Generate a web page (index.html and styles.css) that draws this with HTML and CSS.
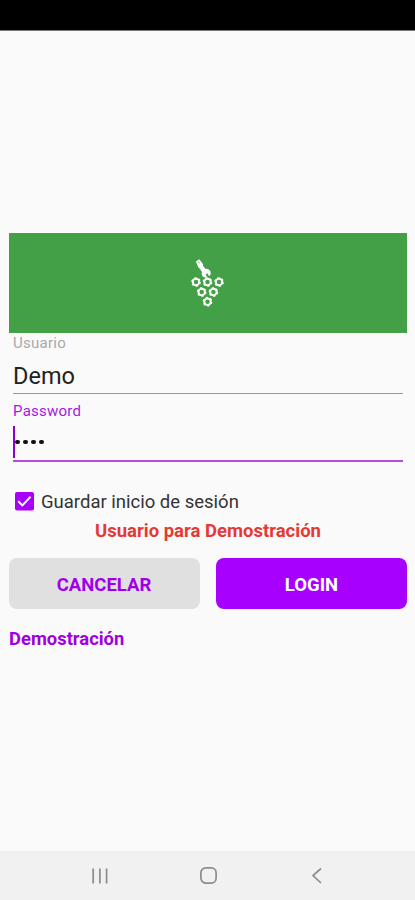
FILE: index.html
```html
<!DOCTYPE html>
<html lang="es">
<head>
<meta charset="utf-8">
<title>Login</title>
<link rel="stylesheet" href="styles.css">
</head>
<body>
<div class="screen">
  <header class="status-bar"></header>
  <main class="content">
    <div class="banner">
      <svg class="logo" width="36" height="50" viewBox="190 258 36 50" fill="none" stroke="#fff">
        <defs>
          <g id="gear">
            <circle r="3.2" stroke-width="1.9"/>
            <circle r="4.3" stroke-width="1.1" stroke-dasharray="2.3 2.203"/>
          </g>
        </defs>
        <path d="M195.8 261.600l3.600-2.400 3.800 5.300-.2 1.200 2.600 3.200c2.800-.4 5 1.500 5.200 4.200l-.6 2.300-1.300.3-1.600-2.400-1.700 1.100 1.300 2.200-1.200 1.100c-3-.4-4.700-2.900-3.700-5.700l-2.500-3.700-1.100-.7z" fill="#fff" stroke="none"/>
        <path d="M198.500 261.700l1 1.600" stroke="#43a047" stroke-width="0.8"/>
        <use href="#gear" x="196" y="282"/>
        <use href="#gear" x="207.5" y="282"/>
        <use href="#gear" x="219" y="282"/>
        <use href="#gear" x="201.7" y="292"/>
        <use href="#gear" x="213.4" y="292"/>
        <use href="#gear" x="207.5" y="301.7"/>
      </svg>
    </div>
    <div class="field">
      <span class="label">Usuario</span>
      <span class="value">Demo</span>
    </div>
    <div class="field focused">
      <span class="label">Password</span>
      <span class="value"><i class="caret"></i><i class="dot"></i><i class="dot"></i><i class="dot"></i><i class="dot"></i></span>
    </div>
    <div class="remember">
      <svg width="19" height="19" viewBox="0 0 19 19"><rect width="19" height="18.5" rx="2" fill="#a800fb"/><path d="M3.2 9.2l4.2 4.2 8.2-8.6" fill="none" stroke="#fff" stroke-width="2"/></svg>
      <span class="remember-text">Guardar inicio de sesión</span>
    </div>
    <p class="message"><span>Usuario para Demostración</span></p>
    <div class="actions">
      <div class="button cancel"><span>CANCELAR</span></div>
      <div class="button login"><span>LOGIN</span></div>
    </div>
    <div class="demo"><span>Demostración</span></div>
  </main>
  <nav class="nav-bar">
    <svg width="18" height="18" viewBox="0 0 18 18"><path d="M2.2 1.5v15M8.9 1.5v15M15.6 1.5v15"/></svg>
    <svg width="18" height="18" viewBox="0 0 18 18"><rect x="0.9" y="0.9" width="15.2" height="15.2" rx="4.8"/></svg>
    <svg width="18" height="18" viewBox="0 0 18 18"><path d="M13 1.5L5 8.5l8 7.5"/></svg>
  </nav>
</div>
</body>
</html>
```
FILE: styles.css
```css
* {
  box-sizing: border-box;
}

body {
  margin: 0;
  font-family: Roboto, sans-serif;
  background: #fafafa;
}

.screen {
  display: flex;
  flex-direction: column;
  height: 900px;
}

.status-bar {
  height: 31px;
  background: #000;
  border-bottom: 1px solid #777;
}

.content {
  flex: 1;
  padding: 202px 8px 0 9px;
}

.banner {
  height: 100px;
  padding: 25px 0 0 181px;
  background: #43a047;
}

.logo {
  display: block;
}

.field {
  display: flex;
  flex-direction: column;
  height: 61px;
  margin: 0 4px;
  border-bottom: 1px solid #9b9b9b;
}

.label {
  height: 20px;
  font-size: 15px;
  line-height: 20px;
  letter-spacing: 0.25px;
  color: #a9a9a9;
}

.value {
  display: flex;
  align-items: center;
  height: 40px;
  padding-top: 7px;
  font-size: 23.5px;
  line-height: 33px;
  color: #222;
}

.focused {
  height: 68px;
  padding-top: 7px;
  border-bottom: 2px solid #b84ae2;
}

.focused .label {
  color: #a31be0;
}

.focused .value {
  padding-top: 3px;
}

.caret {
  width: 2px;
  height: 32px;
  background: #8f00cf;
}

.dot {
  width: 4.6px;
  height: 4.6px;
  margin-right: 3.4px;
  border-radius: 50%;
  background: #111;
}

.remember {
  display: flex;
  align-items: center;
  gap: 7px;
  height: 28px;
  margin: 25px 0 0 6px;
  font-size: 18.5px;
  color: #333;
}

.remember-text {
  padding-top: 2px;
}

.message {
  margin: 2px 0 0;
  font-size: 18.5px;
  font-weight: 700;
  line-height: 28px;
  text-align: center;
  color: #e53935;
}

.actions {
  display: grid;
  grid-template-columns: 1fr 1fr;
  gap: 16px;
  margin-top: 13px;
}

.button {
  display: flex;
  align-items: center;
  justify-content: center;
  height: 51px;
  padding-top: 2px;
  border-radius: 8px;
  font-size: 18.5px;
  font-weight: 700;
}

.cancel {
  padding-right: 1px;
  background: #e0e0e0;
  color: #a000e8;
}

.login {
  background: #a800ff;
  color: #fff;
}

.demo {
  margin-top: 16px;
  font-size: 18.4px;
  font-weight: 700;
  line-height: 28px;
  color: #a000e0;
}

.nav-bar {
  display: flex;
  justify-content: space-between;
  align-items: center;
  height: 49px;
  padding: 0 89px 0 91px;
  background: #f1f1f1;
}

.nav-bar svg {
  fill: none;
  stroke: #8c8c8c;
  stroke-width: 1.7;
}
```
